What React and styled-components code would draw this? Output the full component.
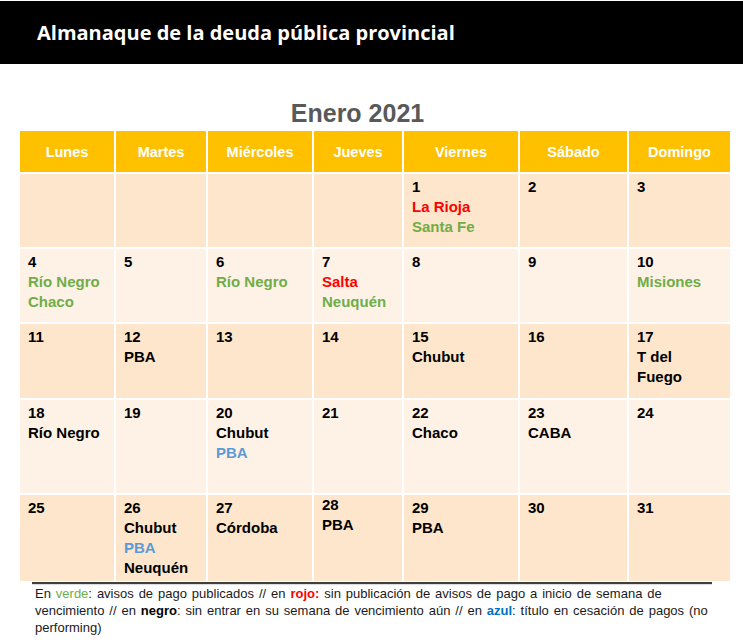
import React from "react";
import styled, { createGlobalStyle } from "styled-components";

const Global = createGlobalStyle`
  html, body { margin: 0; padding: 0; background: #ffffff; }
  body { font-family: "Liberation Sans", Arial, sans-serif; }
`;

const Page = styled.div`
  width: 743px;
  height: 643px;
  overflow: hidden;
  background: #ffffff;
  padding-top: 1px;
  box-sizing: border-box;
`;

const TopBar = styled.header`
  height: 63px;
  background: #000000;
  display: flex;
  align-items: center;
  padding-left: 37px;
  padding-bottom: 1px;
  box-sizing: border-box;
`;

const BarTitle = styled.h1`
  margin: 0;
  color: #ffffff;
  font-family: "Open Sans", "Noto Sans", sans-serif;
  font-weight: 700;
  font-size: 20px;
  letter-spacing: 0;
`;

const Month = styled.h2`
  margin: 34px 0 3px 0;
  height: 30px;
  line-height: 30px;
  text-align: center;
  padding-right: 28px;
  font-family: "Liberation Sans", Arial, sans-serif;
  font-weight: 700;
  font-size: 25px;
  color: #595959;
`;

const Grid = styled.div`
  margin-left: 20px;
  width: 710px;
  display: grid;
  grid-template-columns: 94px 90px 104px 88px 114px 107px 101px;
  grid-template-rows: 41px 73px 73px 74px 93px 86px;
  gap: 2px;
  background: #ffffff;
`;

const HeadCell = styled.div`
  background: #ffc000;
  color: #ffffff;
  font-weight: 700;
  font-size: 14.5px;
  display: flex;
  align-items: center;
  justify-content: center;
`;

const Cell = styled.div`
  background: ${(p) => (p.$band ? "#fde6cb" : "#fef2e7")};
  padding: ${(p) => (p.$shift ? "0px" : "3px")} 8px 0 8px;
  box-sizing: border-box;
  font-weight: 700;
  font-size: 15px;
  line-height: 20px;
  overflow: hidden;
`;

const Line = styled.div`
  color: ${(p) => p.$color || "#000000"};
  white-space: nowrap;
`;

const Rule = styled.div`
  margin: 1px 0 0 32px;
  width: 680px;
  height: 2px;
  background: #3f3f3f;
  box-shadow: 0 1px 1px rgba(0, 0, 0, 0.15);
`;

const Note = styled.p`
  margin: 1px 0 0 0;
  padding-left: 35px;
  width: 680px;
  font-size: 13px;
  line-height: 17px;
  word-spacing: 1.3px;
  color: #1a1a1a;
`;

const Mark = styled.span`
  color: ${(p) => p.$color};
  font-weight: ${(p) => (p.$bold ? 700 : 400)};
`;

const G = "#70ad47";
const R = "#ff0000";
const B = "#5b9bd5";

const days = ["Lunes", "Martes", "Miércoles", "Jueves", "Viernes", "Sábado", "Domingo"];

const weeks = [
  [
    null, null, null, null,
    { n: "1", items: [["La Rioja", R], ["Santa Fe", G]] },
    { n: "2" },
    { n: "3" },
  ],
  [
    { n: "4", items: [["Río Negro", G], ["Chaco", G]] },
    { n: "5" },
    { n: "6", items: [["Río Negro", G]] },
    { n: "7", items: [["Salta", R], ["Neuquén", G]] },
    { n: "8" },
    { n: "9" },
    { n: "10", items: [["Misiones", G]] },
  ],
  [
    { n: "11" },
    { n: "12", items: [["PBA"]] },
    { n: "13" },
    { n: "14" },
    { n: "15", items: [["Chubut"]] },
    { n: "16" },
    { n: "17", items: [["T del"], ["Fuego"]] },
  ],
  [
    { n: "18", items: [["Río Negro"]] },
    { n: "19" },
    { n: "20", items: [["Chubut"], ["PBA", B]] },
    { n: "21" },
    { n: "22", items: [["Chaco"]] },
    { n: "23", items: [["CABA"]] },
    { n: "24" },
  ],
  [
    { n: "25" },
    { n: "26", items: [["Chubut"], ["PBA", B], ["Neuquén"]] },
    { n: "27", items: [["Córdoba"]] },
    { n: "28", items: [["PBA"]], shift: true },
    { n: "29", items: [["PBA"]] },
    { n: "30" },
    { n: "31" },
  ],
];

export default function App() {
  return (
    <>
      <Global />
      <Page>
        <TopBar>
          <BarTitle>Almanaque de la deuda pública provincial</BarTitle>
        </TopBar>
        <Month>Enero 2021</Month>
        <Grid>
          {days.map((d) => (
            <HeadCell key={d}>{d}</HeadCell>
          ))}
          {weeks.map((w, wi) =>
            w.map((c, ci) => (
              <Cell key={`${wi}-${ci}`} $band={wi % 2 === 0} $shift={c && c.shift}>
                {c && <Line>{c.n}</Line>}
                {c &&
                  c.items &&
                  c.items.map(([t, col], i) => (
                    <Line key={i} $color={col}>
                      {t}
                    </Line>
                  ))}
              </Cell>
            ))
          )}
        </Grid>
        <Rule />
        <Note>
          En <Mark $color={G}>verde</Mark>: avisos de pago publicados // en{" "}
          <Mark $color={R} $bold>rojo:</Mark> sin publicación de avisos de pago a inicio de semana de
          vencimiento // en <Mark $color="#000" $bold>negro</Mark>: sin entrar en su semana de
          vencimiento aún // en <Mark $color="#0070c0" $bold>azul</Mark>: título en cesación de pagos
          (no performing)
        </Note>
      </Page>
    </>
  );
}
